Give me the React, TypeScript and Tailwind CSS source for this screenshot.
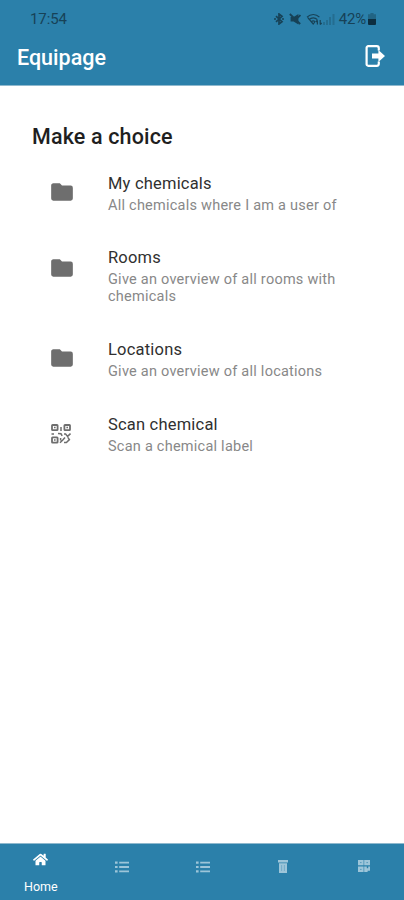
import { FaHome } from "react-icons/fa";

type IconProps = { className?: string };

function FolderIcon({ className }: IconProps) {
  return (
    <svg className={className} viewBox="0 0 24 24" fill="currentColor">
      <path d="M10 4H4c-1.11 0-2 .89-2 2v12a2 2 0 0 0 2 2h16a2 2 0 0 0 2-2V8a2 2 0 0 0-2-2h-8l-2-2z" />
    </svg>
  );
}

function QrScanIcon({ className }: IconProps) {
  return (
    <svg className={className} viewBox="0 0 20 20" fill="none" stroke="currentColor">
      <rect x="1" y="1" width="5.6" height="5.2" rx="0.6" strokeWidth="1.8" />
      <rect x="13.4" y="1" width="5.6" height="5.2" rx="0.6" strokeWidth="1.8" />
      <rect x="1" y="13.4" width="5.6" height="5.2" rx="0.6" strokeWidth="1.8" />
      <path
        strokeWidth="1.5"
        d="M3 3.6h1.6M15.4 3.6H17M3 16h1.6M10 3v4M.5 10h2.5M7 9.6l3 .2 1.2 2M13 10h1.6l2 2.4L19.5 9.6M9.6 14v2.6M9 18.8l3-3 2-2.4M13 18.6h2.4l3-3-1.6-2.2"
      />
    </svg>
  );
}

function ExitIcon({ className }: IconProps) {
  return (
    <svg className={className} viewBox="0 0 20 24" fill="none">
      <path
        d="M13.8 6.4V4.2a2 2 0 0 0-2-2H3.2a1.6 1.6 0 0 0-1.6 1.6v16.4a1.6 1.6 0 0 0 1.6 1.6h8.6a2 2 0 0 0 2-2v-2.2"
        stroke="currentColor"
        strokeWidth="2.2"
      />
      <path d="M7 9.6h6.4V6L20 12l-6.6 6v-3.6H7z" fill="currentColor" />
    </svg>
  );
}

function BluetoothIcon() {
  return (
    <svg className="h-3 w-2.5" viewBox="0 0 10 12" fill="none" stroke="currentColor" strokeWidth="1.7">
      <path d="M2 3.2l6 5.4-3 2.4V1l3 2.4-6 5.4" />
      <path d="M0 6h2M8 6h2" />
    </svg>
  );
}

function MutedIcon() {
  return (
    <svg className="h-3 w-3" viewBox="0 0 12 12">
      <path d="M1.6 4h3L9.4 1v10.4L4.6 8.4h-3z" fill="currentColor" />
      <path d="M.8 1l10.4 10M8.6 5l2.8-3" stroke="currentColor" strokeWidth="1.8" />
    </svg>
  );
}

function WifiIcon() {
  return (
    <svg className="h-3 w-4" viewBox="0 0 16 12" fill="none" stroke="currentColor" strokeWidth="1.2">
      <path d="M1 4.2c3.6-3.6 9-3.6 12.4 0M3 6.6c2.4-2.4 6-2.4 8.4 0M5.2 8.8c1.2-1.2 2.8-1.2 4 0" />
      <path d="M1.6 4.4L7.2 11l1.6-2" />
      <path d="M11.4 11.6V7.4M9.8 9l1.6-1.8M14.2 7v4.4M14.2 11.6L15.6 10" />
    </svg>
  );
}

function SignalIcon() {
  return (
    <svg className="h-3 w-3 opacity-30" viewBox="0 0 12 12" fill="currentColor">
      <path d="M0 9h2v3H0zM3 7h2v5H3zM6 4h2v8H6zM9.5 1h2v11h-2z" />
    </svg>
  );
}

function BatteryIcon() {
  return (
    <svg className="h-3 w-2" viewBox="0 0 8 12" fill="currentColor">
      <path d="M2.4 0h3.2v1.2H8V6H0V1.2h2.4z" opacity="0.45" />
      <path d="M0 6h8v5a1 1 0 0 1-1 1H1a1 1 0 0 1-1-1z" className="text-[#0d2e40]" />
    </svg>
  );
}

function ListIcon({ className }: IconProps) {
  return (
    <svg className={className} viewBox="0 0 14 12" fill="currentColor">
      <path d="M0 .5h2.6v2.2H0zM0 4.9h2.6v2.2H0zM0 9.3h2.6v2.2H0zM4.2.7H14v1.8H4.2zM4.2 5.1H14v1.8H4.2zM4.2 9.5H14v1.8H4.2z" />
    </svg>
  );
}

function BinIcon({ className }: IconProps) {
  return (
    <svg className={className} viewBox="0 0 10 13" fill="currentColor">
      <path d="M0 0h10v2.4H0zM1 3.2h8V13H1z" />
      <path d="M3.6 5v6M6.4 5v6" stroke="#2b80aa" strokeWidth="0.35" />
    </svg>
  );
}

function GridIcon({ className }: IconProps) {
  return (
    <svg className={className} viewBox="0 0 12 12">
      <path d="M0 0h5.6v5.2H0zM6.2 0H12v5.2H6.2zM0 6.6h5.6V12H0zM6.2 6.6h2.6v1.6h1.4V6.6H12v4.2H9.6V12H6.2z" fill="currentColor" />
      <path d="M2 2.6h1.6M8.4 2.6H10M2 9.4h1.6" stroke="#2b80aa" strokeWidth="0.6" />
    </svg>
  );
}

const choices = [
  { title: "My chemicals", text: "All chemicals where I am a user of", icon: FolderIcon, row: "h-[74px]", iconClass: "mt-[7px] size-[26px]" },
  { title: "Rooms", text: "Give an overview of all rooms with chemicals", icon: FolderIcon, row: "h-[92px]", iconClass: "mt-[9px] size-[26px]" },
  { title: "Locations", text: "Give an overview of all locations", icon: FolderIcon, row: "h-[75px]", iconClass: "mt-[7px] size-[26px]" },
  { title: "Scan chemical", text: "Scan a chemical label", icon: QrScanIcon, row: "h-[76px]", iconClass: "mt-[11px] ml-0.5 mr-1 size-5" },
];

export default function App() {
  return (
    <div className="flex h-[900px] w-[404px] flex-col overflow-hidden bg-white font-['Roboto',sans-serif]">
      <header className="h-[86px] shrink-0 border-b border-[#8fb9ce] bg-[#2b80aa]">
        <div className="flex h-9 items-center justify-between pl-[30px] pr-7 pt-0.5 text-[#174257]">
          <span className="text-[15px] tracking-[-0.1px]">17:54</span>
          <div className="flex items-center">
            <BluetoothIcon />
            <span className="w-[5px]" />
            <MutedIcon />
            <span className="w-[5px]" />
            <WifiIcon />
            <span className="w-px" />
            <SignalIcon />
            <span className="ml-1 mr-0.5 text-[15px] tracking-[-0.2px]">42%</span>
            <BatteryIcon />
          </div>
        </div>
        <div className="flex h-[42px] items-center justify-between pl-[17px] pr-[19px] text-white">
          <h1 className="pt-0.5 text-[21.5px] font-medium">Equipage</h1>
          <ExitIcon className="mb-0.5 h-6 w-5" />
        </div>
      </header>

      <main className="flex-1 pt-[35px]">
        <h2 className="pl-8 text-[21.5px] font-medium leading-8 tracking-[0.15px] text-[#1f1f1f]">
          Make a choice
        </h2>
        <ul className="pt-[19px]">
          {choices.map(({ title, text, icon: Icon, row, iconClass }) => (
            <li key={title} className={`flex items-start pl-[49px] ${row}`}>
              <Icon className={`shrink-0 text-[#6e6e6e] ${iconClass}`} />
              <div className="ml-[33px] w-[250px]">
                <p className="text-[16.5px] leading-6 tracking-[0.2px] text-[#303030]">{title}</p>
                <p className="pt-[0.5px] text-[14.5px] leading-[17.5px] tracking-[0.24px] text-[#888888]">{text}</p>
              </div>
            </li>
          ))}
        </ul>
      </main>

      <nav className="grid h-[57px] shrink-0 grid-cols-5 border-t border-[#8fb9ce] bg-[#2b80aa] text-[#9dc5d9]">
        <div className="flex flex-col items-center pl-px pt-2 text-white">
          <FaHome className="size-[15px]" />
          <span className="mt-3 text-[12.5px] leading-4">Home</span>
        </div>
        <div className="flex justify-center pl-0.5 pt-[17px]">
          <ListIcon className="h-3 w-3.5" />
        </div>
        <div className="flex justify-center pl-0.5 pt-[17px]">
          <ListIcon className="h-3 w-3.5" />
        </div>
        <div className="flex justify-center pl-px pt-4">
          <BinIcon className="h-[13px] w-2.5" />
        </div>
        <div className="flex justify-center pl-px pt-4">
          <GridIcon className="size-3" />
        </div>
      </nav>
    </div>
  );
}
